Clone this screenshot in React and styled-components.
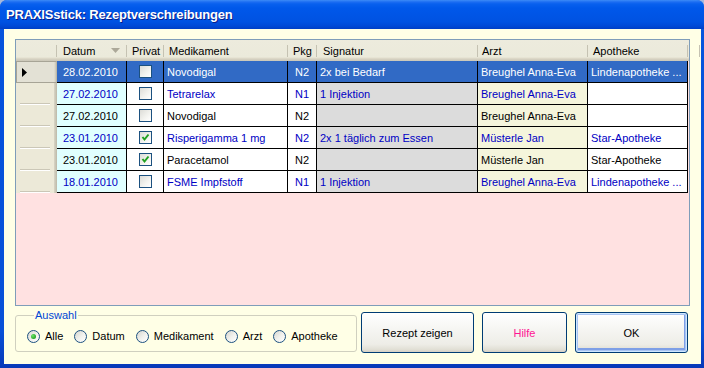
import React from 'react';
import styled, { createGlobalStyle, css } from 'styled-components';

const Global = createGlobalStyle`
  html, body { margin: 0; padding: 0; background: #A6B8DC; }
  body {
    width: 704px; height: 368px; overflow: hidden;
    font-family: "Liberation Sans", Arial, sans-serif; font-size: 11px;
  }
  * { box-sizing: border-box; }
`;

const COLS = '41px 70px 37px 124px 29px 161px 110px 100px';

const Window = styled.div`
  width: 704px; height: 368px;
  display: flex; flex-direction: column;
  border-radius: 7px 7px 0 0; overflow: hidden;
  background: linear-gradient(to bottom, #0855DD 0%, #0850D8 90%, #0838B8 100%);
`;

const TitleBar = styled.div`
  height: 29px; flex: none;
  display: flex; align-items: center; padding-left: 6px;
  background: linear-gradient(to bottom,
    #3D8BF7 0px, #1C6DF2 2px, #0860EE 4px, #0058EA 8px,
    #0055E6 50%, #0052E2 75%, #0049D6 90%, #003FC6 100%);
  color: #fff; font-weight: bold; font-size: 13px; letter-spacing: -0.2px;
  font-family: "Liberation Sans", Arial, sans-serif;
  text-shadow: 1px 1px 0 #0A1E8A;
`;

const Client = styled.div`
  flex: 1;
  margin: 0 3px 4px 4px;
  background: #FFFFE6;
  display: flex; flex-direction: column;
  padding: 10px 11px 0 11px;
`;

const Grid = styled.div`
  height: 267px; flex: none;
  border: 1px solid #7F9DB9;
  background: #FFE1E1;
  display: flex; flex-direction: column;
`;

const HeaderRow = styled.div`
  display: grid; grid-template-columns: ${COLS} 1fr;
  height: 21px;
  background: linear-gradient(to bottom, #EDEBDD 0, #EBEADB 17px, #E2DECD 18px, #D6D2C2 19px, #CBC7B8 21px);
`;

const HeadCell = styled.div`
  display: flex; align-items: center; justify-content: space-between;
  padding: 0 7px 0 ${p => p.$pad ?? 5}px;
  color: #000; white-space: nowrap;
  background: linear-gradient(#C5C2B2, #C5C2B2) no-repeat right 0 center / 1px 12px;
`;

const SortArrow = () => (
  <svg width="9" height="5" viewBox="0 0 9 5">
    <polygon points="0,0 9,0 4.5,5" fill="#ACA899" />
  </svg>
);

const Row = styled.div`
  display: grid; grid-template-columns: ${COLS};
  height: 22px;
`;

const RowHead = styled.div`
  display: flex; align-items: center; padding-left: 6px;
  background:
    linear-gradient(to right, transparent calc(100% - 3px), #D8D5C6 calc(100% - 3px), #BDB9A8 100%),
    linear-gradient(#CBC7B7, #CBC7B7) no-repeat 4px calc(100% - 1px) / calc(100% - 11px) 1px,
    linear-gradient(#FFFFFF, #FFFFFF) no-repeat 4px 100% / calc(100% - 11px) 1px,
    #ECE9D8;
  ${p => p.$current && css`
    padding-left: 5px;
    border: 1px solid #A7A496;
    border-right-color: #BDB9A8;
    background:
      linear-gradient(to right, transparent calc(100% - 2px), #C9C5B5 100%),
      #E3E1D5;
  `}
`;

const tones = {
  sel: css`color: #fff;`,
  blue: css`color: #0000C4;`,
  black: css`color: #000;`,
};

const Cell = styled.div`
  display: flex; align-items: center;
  justify-content: ${p => p.$align === 'right' ? 'flex-end' : p.$align === 'center' ? 'center' : 'flex-start'};
  padding: ${p => p.$align === 'right' ? '0 8px 0 0' : p.$align === 'center' ? '0' : '0 0 0 3px'};
  border-right: 1px solid #000; border-bottom: 1px solid #000;
  white-space: nowrap; overflow: hidden;
  background: ${p => p.$sel ? '#316AC5' : p.$bg || '#FFFFFF'};
  ${p => tones[p.$tone]}
`;

const CheckBox = styled.span`
  width: 13px; height: 13px;
  border: 1px solid #1C5180;
  background: linear-gradient(135deg, #DCDCD7 0%, #F4F4F0 60%, #FFFFFF 100%);
  display: flex; align-items: center; justify-content: center;
`;

const Pointer = () => (
  <svg width="5" height="9" viewBox="0 0 5 9">
    <polygon points="0,0 5,4.5 0,9" fill="#000" />
  </svg>
);

const Check = () => (
  <svg width="9" height="9" viewBox="0 0 9 9">
    <polyline points="1.5,4 3.5,6.5 7.5,1.5" fill="none" stroke="#21A121" strokeWidth="2" />
  </svg>
);

const Bottom = styled.div`
  display: flex; align-items: flex-start;
`;

const Group = styled.fieldset`
  margin: 3px 0 0 0;
  width: 342px; min-width: 0; flex: none;
  border: 1px solid #D0D0BF; border-radius: 3px;
  padding: 8px 6px 8px 11px;
  display: flex; gap: 11px; align-items: center;
`;

const Legend = styled.legend`
  color: #0046D5; padding: 0 1px; margin-left: 7px;
  font-size: 11px; line-height: 13px;
`;

const RadioItem = styled.label`
  display: flex; align-items: center; gap: 5px;
  color: #000; line-height: 13px; white-space: nowrap;
`;

const Radio = styled.span`
  width: 13px; height: 13px; border-radius: 50%;
  border: 1px solid #1C5180;
  background: linear-gradient(135deg, #D6D6D0 0%, #F2F2EE 55%, #FFFFFF 100%);
  display: flex; align-items: center; justify-content: center;
`;

const Dot = styled.span`
  width: 5px; height: 5px; border-radius: 50%;
  background: radial-gradient(circle at 35% 35%, #6CE36A 0%, #21A121 75%);
`;

const Button = styled.button`
  margin: 6px 0 0 ${p => p.$ml}px;
  width: ${p => p.$w}px; height: 41px; flex: none;
  border: 1px solid #003C74; border-radius: 3px;
  background: linear-gradient(to bottom, #FFFFFF 0%, #F6F6F3 40%, #EEEDE7 80%, #E2E0D6 93%, #D6D0C5 100%);
  font-family: "Liberation Sans", Arial, sans-serif; font-size: 11px;
  color: ${p => p.$color || '#000'};
  padding: 0;
  ${p => p.$default && css`
    box-shadow: inset 0 0 0 1px #CEE7FF, inset 0 0 0 2px #A9C4F2, inset -1px -2px 0 2px #7E9FE6;
  `}
`;

const rows = [
  { d: '28.02.2010', p: false, m: 'Novodigal', k: 'N2', s: '2x bei Bedarf', a: 'Breughel Anna-Eva', ap: 'Lindenapotheke ...', tone: 'sel' },
  { d: '27.02.2010', p: false, m: 'Tetrarelax', k: 'N1', s: '1 Injektion', a: 'Breughel Anna-Eva', ap: '', tone: 'blue' },
  { d: '27.02.2010', p: false, m: 'Novodigal', k: 'N2', s: '', a: 'Breughel Anna-Eva', ap: '', tone: 'black' },
  { d: '23.01.2010', p: true, m: 'Risperigamma 1 mg', k: 'N2', s: '2x 1 täglich zum Essen', a: 'Müsterle Jan', ap: 'Star-Apotheke', tone: 'blue' },
  { d: '23.01.2010', p: true, m: 'Paracetamol', k: 'N2', s: '', a: 'Müsterle Jan', ap: 'Star-Apotheke', tone: 'black' },
  { d: '18.01.2010', p: false, m: 'FSME Impfstoff', k: 'N1', s: '1 Injektion', a: 'Breughel Anna-Eva', ap: 'Lindenapotheke ...', tone: 'blue' },
];

const options = ['Alle', 'Datum', 'Medikament', 'Arzt', 'Apotheke'];

export default function App() {
  return (
    <>
      <Global />
      <Window>
        <TitleBar>PRAXISstick: Rezeptverschreibungen</TitleBar>
        <Client>
          <Grid>
            <HeaderRow>
              <HeadCell />
              <HeadCell $pad={6}>Datum<SortArrow /></HeadCell>
              <HeadCell $pad={5}>Privat</HeadCell>
              <HeadCell $pad={5}>Medikament</HeadCell>
              <HeadCell $pad={5}>Pkg</HeadCell>
              <HeadCell $pad={6}>Signatur</HeadCell>
              <HeadCell $pad={4}>Arzt</HeadCell>
              <HeadCell $pad={5}>Apotheke</HeadCell>
              <HeadCell />
            </HeaderRow>
            {rows.map((r, i) => {
              const sel = r.tone === 'sel';
              return (
                <Row key={i}>
                  <RowHead $current={sel}>{sel && <Pointer />}</RowHead>
                  <Cell $align="right" $bg="#E0FFFF" $sel={sel} $tone={r.tone}>{r.d}</Cell>
                  <Cell $align="center" $sel={sel} $tone={r.tone}>
                    <CheckBox>{r.p && <Check />}</CheckBox>
                  </Cell>
                  <Cell $sel={sel} $tone={r.tone}>{r.m}</Cell>
                  <Cell $align="center" $sel={sel} $tone={r.tone}>{r.k}</Cell>
                  <Cell $bg="#DCDCDC" $sel={sel} $tone={r.tone}>{r.s}</Cell>
                  <Cell $bg="#F5F5DC" $sel={sel} $tone={r.tone}>{r.a}</Cell>
                  <Cell $sel={sel} $tone={r.tone}>{r.ap}</Cell>
                </Row>
              );
            })}
          </Grid>
          <Bottom>
            <Group>
              <Legend>Auswahl</Legend>
              {options.map((o, i) => (
                <RadioItem key={o}>
                  <Radio>{i === 0 && <Dot />}</Radio>
                  {o}
                </RadioItem>
              ))}
            </Group>
            <Button $w={113} $ml={4}>Rezept zeigen</Button>
            <Button $w={85} $ml={8} $color="#FF1493">Hilfe</Button>
            <Button $w={113} $ml={8} $default>OK</Button>
          </Bottom>
        </Client>
      </Window>
    </>
  );
}
